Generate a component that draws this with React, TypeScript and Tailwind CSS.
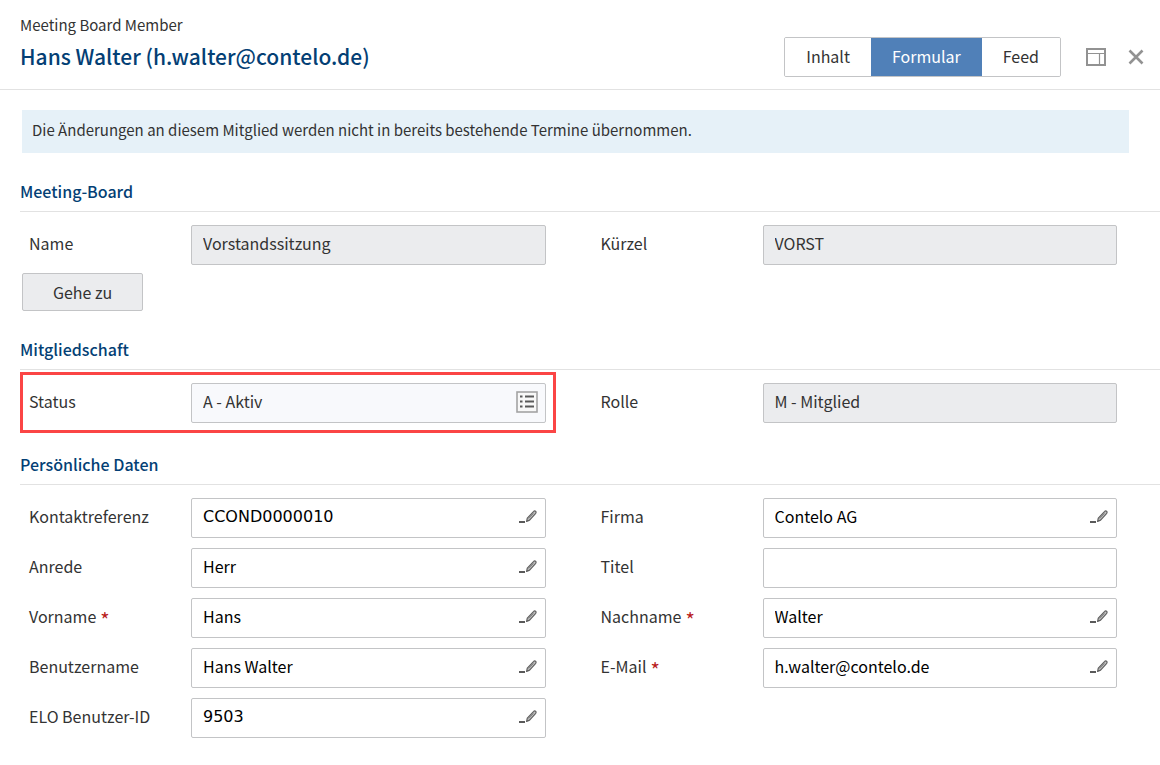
import { useId, useState, type ReactNode } from 'react';

type FieldKind = 'edit' | 'readonly' | 'list' | 'plain';

interface FieldProps {
  label: string;
  value: string;
  kind?: FieldKind;
  required?: boolean;
  numeric?: boolean;
  highlighted?: boolean;
}

const fieldStyles: Record<FieldKind, string> = {
  edit: 'bg-white text-black',
  plain: 'bg-white text-black',
  readonly: 'bg-[#ebecee] text-[#333333]',
  list: 'bg-[#f8f9fc] text-[#333333]',
};

const tabs = ['Inhalt', 'Formular', 'Feed'];

function PencilIcon() {
  return (
    <svg width="20" height="18" viewBox="0 0 20 18" fill="none" aria-hidden="true">
      <path d="M1 14h6" stroke="#5a5a5a" strokeWidth="2" />
      <path d="M8.6 13.4l.7-3.3 6.2-6.5c.7-.8 1.4-.9 2.1-.3.7.6.7 1.3.1 2.1l-6.1 6.7z" fill="#c4c4c4" stroke="#606060" strokeWidth="1.2" strokeLinejoin="round" />
      <path d="M10.6 10.6l4.9-5.2" stroke="#858585" strokeWidth="1" />
    </svg>
  );
}

function ListIcon() {
  return (
    <svg width="22" height="22" viewBox="0 0 22 22" fill="none" aria-hidden="true">
      <rect x="1" y="1" width="20" height="20" fill="#f8f8f8" stroke="#a3a3a3" strokeWidth="1.6" />
      <path d="M4 5.5h2.5M4 10.5h2.5M4 15.5h2.5M9 5.5h9M9 10.5h9M9 15.5h9" stroke="#5a5a5a" strokeWidth="2.2" />
    </svg>
  );
}

function PanelIcon() {
  return (
    <svg width="20" height="18" viewBox="0 0 20 18" fill="none" aria-hidden="true">
      <rect x="1" y="1" width="18" height="16" stroke="#929292" strokeWidth="2" />
      <path d="M2 5.5h16M13.5 5.5V16" stroke="#929292" strokeWidth="1.2" />
    </svg>
  );
}

function CloseIcon() {
  return (
    <svg width="16" height="16" viewBox="0 0 16 16" fill="none" aria-hidden="true">
      <path d="M1.5 1.5l13 13M14.5 1.5l-13 13" stroke="#929292" strokeWidth="2.6" />
    </svg>
  );
}

function Field({ label, value, kind = 'edit', required, numeric, highlighted }: FieldProps) {
  const id = useId();
  return (
    <div className="relative flex items-center">
      {highlighted && (
        <div className="pointer-events-none absolute -top-[11px] -right-[10px] -bottom-[10px] -left-[9px] border-3 border-[#fb4545]" />
      )}
      <label htmlFor={id} className="flex w-[162px] shrink-0 items-center gap-1 pb-1 leading-6 text-[#333333]">
        {label}
        {required && <span className="pt-2 text-xl leading-none text-[#b91c1c]">*</span>}
      </label>
      <div className="relative min-w-0 flex-1">
        <input
          id={id}
          defaultValue={value}
          readOnly={kind === 'readonly'}
          required={required}
          className={`block h-10 w-full rounded-xs border border-[#c3c4c6] pb-1 pl-[11px] pr-10 leading-6 outline-none ${fieldStyles[kind]} ${
            numeric ? "font-['DejaVu_Sans',sans-serif]" : ''
          }`}
        />
        {kind === 'edit' && (
          <button type="button" aria-label={`${label} bearbeiten`} className="absolute top-[10px] right-2">
            <PencilIcon />
          </button>
        )}
        {kind === 'list' && (
          <button type="button" aria-label={`${label} auswählen`} className="absolute top-2 right-2">
            <ListIcon />
          </button>
        )}
      </div>
    </div>
  );
}

function Section({ title, className = '', children }: { title: string; className?: string; children: ReactNode }) {
  return (
    <section className={className}>
      <h2 className="ml-5 border-b border-[#e2e2e2] pb-2 leading-6 font-medium text-[#043f75]">{title}</h2>
      <div className="grid grid-cols-2 gap-x-[55px] gap-y-2.5 pt-[13px] pr-[43px] pl-[29px]">{children}</div>
    </section>
  );
}

export default function App() {
  const [activeTab, setActiveTab] = useState('Formular');

  return (
    <div className="min-h-screen bg-white font-['Noto_Sans_CJK_SC',sans-serif] text-base text-[#333333]">
      <header className="flex items-end justify-between border-b border-[#e2e2e2] pt-[13px] pr-4 pb-3 pl-5">
        <div>
          <p className="pb-[5px] text-[15px] leading-6">Meeting Board Member</p>
          <h1 className="pb-[7px] text-[21px] leading-7 font-medium text-[#043f75]">
            Hans Walter (h.walter@contelo.de)
          </h1>
        </div>
        <div className="flex items-center">
          <div className="flex h-10 overflow-hidden rounded-xs border border-[#c3c4c6]">
            {tabs.map((tab) => (
              <button
                key={tab}
                type="button"
                onClick={() => setActiveTab(tab)}
                className={`px-[21px] pb-0.5 leading-6 ${activeTab === tab ? 'bg-[#5080b8] text-white' : 'bg-white'}`}
              >
                {tab}
              </button>
            ))}
          </div>
          <button type="button" aria-label="Ansicht" className="ml-[25px]">
            <PanelIcon />
          </button>
          <button type="button" aria-label="Schließen" className="ml-[22px]">
            <CloseIcon />
          </button>
        </div>
      </header>

      <main className="pt-5">
        <p className="mr-[31px] mb-[26px] ml-[22px] bg-[#e6f1f8] px-2.5 pt-2 pb-[11px] text-[15px] leading-6">
          Die Änderungen an diesem Mitglied werden nicht in bereits bestehende Termine übernommen.
        </p>

        <Section title="Meeting-Board">
          <Field label="Name" value="Vorstandssitzung" kind="readonly" />
          <Field label="Kürzel" value="VORST" kind="readonly" />
        </Section>
        <button
          type="button"
          className="mt-2 mb-[26px] ml-[22px] block h-[38px] w-[121px] rounded-xs border border-[#c3c4c6] bg-[#ebecee] leading-6"
        >
          Gehe zu
        </button>

        <Section title="Mitgliedschaft" className="mb-[29px]">
          <Field label="Status" value="A - Aktiv" kind="list" highlighted />
          <Field label="Rolle" value="M - Mitglied" kind="readonly" />
        </Section>

        <Section title="Persönliche Daten">
          <Field label="Kontaktreferenz" value="CCOND0000010" numeric />
          <Field label="Firma" value="Contelo AG" />
          <Field label="Anrede" value="Herr" />
          <Field label="Titel" value="" kind="plain" />
          <Field label="Vorname" value="Hans" required />
          <Field label="Nachname" value="Walter" required />
          <Field label="Benutzername" value="Hans Walter" />
          <Field label="E-Mail" value="h.walter@contelo.de" required />
          <Field label="ELO Benutzer-ID" value="9503" numeric />
        </Section>
      </main>
    </div>
  );
}
